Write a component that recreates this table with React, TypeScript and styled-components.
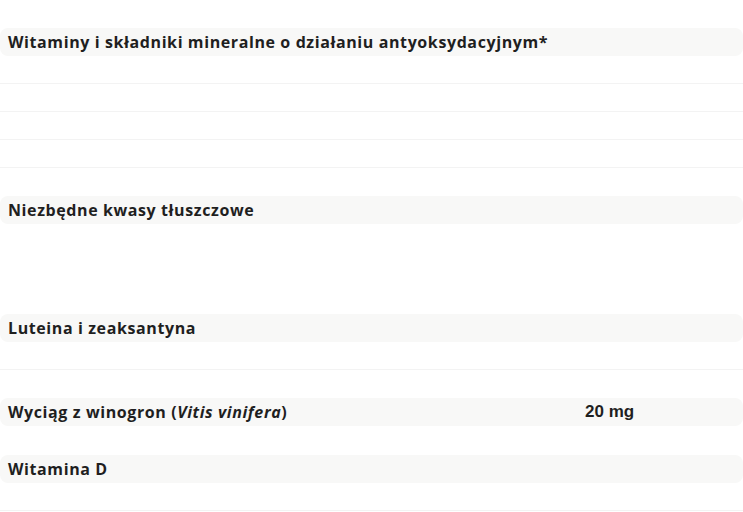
import React from "react";
import styled, { createGlobalStyle } from "styled-components";

const Global = createGlobalStyle`
  html, body { margin: 0; padding: 0; background: #ffffff; }
  body { font-family: "Open Sans", "Noto Sans", sans-serif; color: #222222; }
`;

const Table = styled.div`
  display: flex;
  flex-direction: column;
  gap: 28px;
  padding-top: 28px;
  width: 743px;
`;

const Section = styled.section`
  display: flex;
  flex-direction: column;
`;

const Header = styled.div`
  display: grid;
  grid-template-columns: 577px 1fr;
  height: 28px;
  align-items: center;
  background: #f8f8f7;
  border-radius: 8px;
`;

const Name = styled.div`
  padding-left: 8px;
  font-family: "Open Sans", "Noto Sans", sans-serif;
  font-weight: 700;
  font-size: 16px;
  line-height: 28px;
  letter-spacing: 0.6px;
  color: #1f1f1f;
  white-space: nowrap;
`;

const Amount = styled.div`
  padding-left: 8px;
  font-family: "Liberation Sans", Arial, sans-serif;
  font-weight: 700;
  font-size: 17px;
  line-height: 28px;
  color: #1f1f1f;
`;

const Row = styled.div<{ $h?: number; $line?: boolean }>`
  height: ${(p) => p.$h ?? 28}px;
  border-bottom: ${(p) => (p.$line === false ? "none" : "1px solid #f3f3f3")};
  box-sizing: border-box;
`;

type Sec = { name: React.ReactNode; amount?: string; rows: { h?: number; line?: boolean }[] };

const sections: Sec[] = [
  {
    name: "Witaminy i składniki mineralne o działaniu antyoksydacyjnym*",
    rows: [{}, {}, {}, {}],
  },
  { name: "Niezbędne kwasy tłuszczowe", rows: [{ h: 62, line: false }] },
  { name: "Luteina i zeaksantyna", rows: [{}] },
  {
    name: (
      <>
        Wyciąg z winogron (<i>Vitis vinifera</i>)
      </>
    ),
    amount: "20 mg",
    rows: [{ h: 1, line: false }],
  },
  { name: "Witamina D", rows: [{}] },
];

export default function App() {
  return (
    <>
      <Global />
      <Table>
        {sections.map((s, i) => (
          <Section key={i}>
            <Header>
              <Name>{s.name}</Name>
              <Amount>{s.amount ?? ""}</Amount>
            </Header>
            {s.rows.map((r, j) => (
              <Row key={j} $h={r.h} $line={r.line} />
            ))}
          </Section>
        ))}
      </Table>
    </>
  );
}
